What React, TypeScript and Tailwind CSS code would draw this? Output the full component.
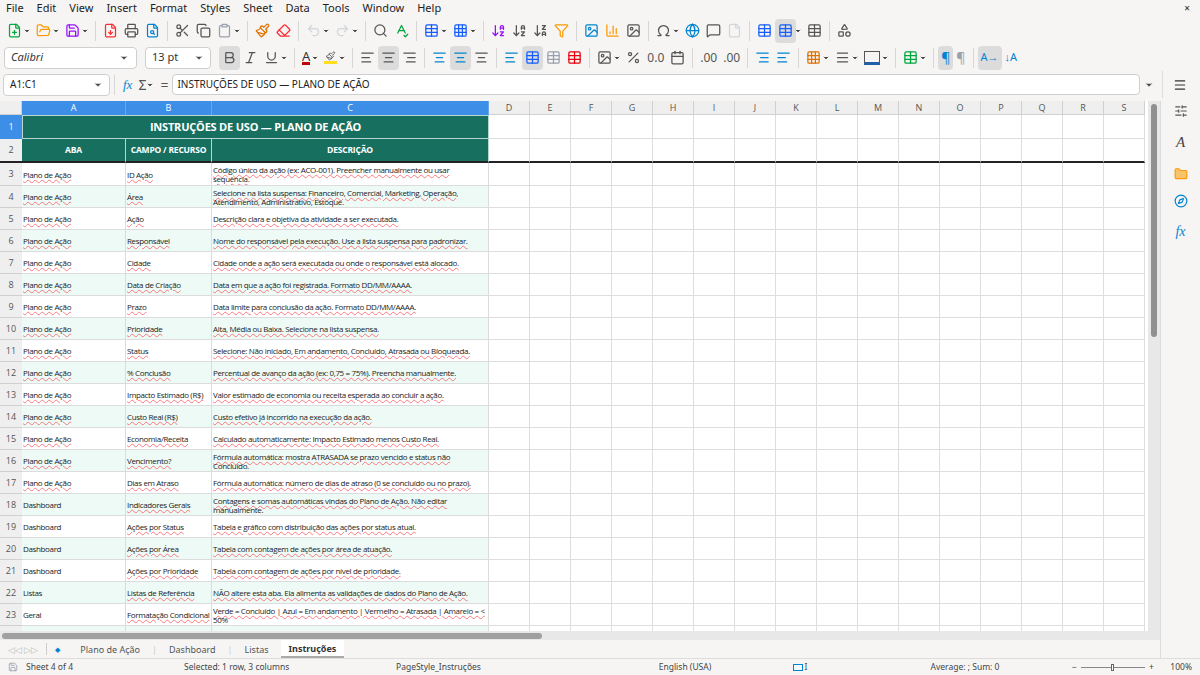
import {
  FilePlus, FolderOpen, Save, FileDown, Printer, FileSearch, Scissors, Copy, Clipboard, Paintbrush, Eraser,
  Undo2, Redo2, Search, SpellCheck, Table, Grid3x3, ArrowDownAZ, ArrowDownZA, Filter, Image, BarChart3,
  Omega, Globe, MessageSquare, File, Shapes, Bold, Italic, Underline, AlignLeft, AlignCenter, AlignRight,
  Percent, Calendar, Menu, SlidersHorizontal, Folder, Compass, ChevronDown,
} from "lucide-react";

const ui = { fontFamily: '"Noto Sans", "Open Sans", sans-serif' };
const cellFont = { fontFamily: '"Open Sans", "Liberation Sans", sans-serif' };

const rows: [string, string, string][] = [
  ["Plano de Ação", "ID Ação", "Código único da ação (ex: ACO-001). Preencher manualmente ou usar sequência."],
  ["Plano de Ação", "Área", "Selecione na lista suspensa: Financeiro, Comercial, Marketing, Operação, Atendimento, Administrativo, Estoque."],
  ["Plano de Ação", "Ação", "Descrição clara e objetiva da atividade a ser executada."],
  ["Plano de Ação", "Responsável", "Nome do responsável pela execução. Use a lista suspensa para padronizar."],
  ["Plano de Ação", "Cidade", "Cidade onde a ação será executada ou onde o responsável está alocado."],
  ["Plano de Ação", "Data de Criação", "Data em que a ação foi registrada. Formato DD/MM/AAAA."],
  ["Plano de Ação", "Prazo", "Data limite para conclusão da ação. Formato DD/MM/AAAA."],
  ["Plano de Ação", "Prioridade", "Alta, Média ou Baixa. Selecione na lista suspensa."],
  ["Plano de Ação", "Status", "Selecione: Não iniciado, Em andamento, Concluído, Atrasada ou Bloqueada."],
  ["Plano de Ação", "% Conclusão", "Percentual de avanço da ação (ex: 0,75 = 75%). Preencha manualmente."],
  ["Plano de Ação", "Impacto Estimado (R$)", "Valor estimado de economia ou receita esperada ao concluir a ação."],
  ["Plano de Ação", "Custo Real (R$)", "Custo efetivo já incorrido na execução da ação."],
  ["Plano de Ação", "Economia/Receita", "Calculado automaticamente: Impacto Estimado menos Custo Real."],
  ["Plano de Ação", "Vencimento?", "Fórmula automática: mostra ATRASADA se prazo vencido e status não Concluído."],
  ["Plano de Ação", "Dias em Atraso", "Fórmula automática: número de dias de atraso (0 se concluído ou no prazo)."],
  ["Dashboard", "Indicadores Gerais", "Contagens e somas automáticas vindas do Plano de Ação. Não editar manualmente."],
  ["Dashboard", "Ações por Status", "Tabela e gráfico com distribuição das ações por status atual."],
  ["Dashboard", "Ações por Área", "Tabela com contagem de ações por área de atuação."],
  ["Dashboard", "Ações por Prioridade", "Tabela com contagem de ações por nível de prioridade."],
  ["Listas", "Listas de Referência", "NÃO altere esta aba. Ela alimenta as validações de dados do Plano de Ação."],
  ["Geral", "Formatação Condicional", "Verde = Concluído | Azul = Em andamento | Vermelho = Atrasada | Amarelo = < 50%"],
  ["Geral", "Atualização", "Atualize o % Conclusão e o Status semanalmente para manter o dashboard"],
];

const extra = ["D", "E", "F", "G", "H", "I", "J", "K", "L", "M", "N", "O", "P", "Q", "R", "S"];
const cols = "22px 104px 86px 277px repeat(16, 41px)";

function Ico({ children, active }: { children: React.ReactNode; active?: boolean }) {
  return <div className={`h-6 px-[3px] flex items-center rounded ${active ? "bg-[#dcdcdc]" : ""}`}>{children}</div>;
}
const Sep = () => <div className="w-px h-5 bg-[#d6d6d6] mx-1" />;
const Dd = () => <ChevronDown size={8} className="text-[#444] -ml-0.5 mr-0.5" fill="#444" />;

export default function App() {
  const s = 15;
  return (
    <div style={ui} className="w-[1200px] h-[675px] bg-[#f6f5f4] flex flex-col overflow-hidden text-[#222]">
      {/* menu */}
      <div className="h-[17px] flex items-center text-[11px] gap-[13px] px-[6px]">
        {["File", "Edit", "View", "Insert", "Format", "Styles", "Sheet", "Data", "Tools", "Window", "Help"].map(m => <span key={m}>{m}</span>)}
        <span className="ml-auto text-[10px] pr-1">×</span>
      </div>
      {/* toolbar 1 */}
      <div className="h-[27px] flex items-center px-1 text-[#555]">
        <Ico><FilePlus size={s} className="text-green-600" /></Ico><Dd />
        <Ico><FolderOpen size={s} className="text-amber-500" /></Ico><Dd />
        <Ico><Save size={s} className="text-purple-600" /></Ico><Dd />
        <Sep />
        <Ico><FileDown size={s} className="text-red-500" /></Ico>
        <Ico><Printer size={s} /></Ico>
        <Ico><FileSearch size={s} className="text-sky-600" /></Ico>
        <Sep />
        <Ico><Scissors size={s} /></Ico>
        <Ico><Copy size={s} /></Ico>
        <Ico><Clipboard size={s} className="text-gray-400" /></Ico><Dd />
        <Sep />
        <Ico><Paintbrush size={s} className="text-amber-600" /></Ico>
        <Ico><Eraser size={s} className="text-red-500" /></Ico>
        <Sep />
        <Ico><Undo2 size={s} className="text-gray-300" /></Ico><Dd />
        <Ico><Redo2 size={s} className="text-gray-300" /></Ico><Dd />
        <Sep />
        <Ico><Search size={s} /></Ico>
        <Ico><SpellCheck size={s} className="text-green-600" /></Ico>
        <Sep />
        <Ico><Table size={s} className="text-blue-600" /></Ico><Dd />
        <Ico><Grid3x3 size={s} className="text-blue-600" /></Ico><Dd />
        <Sep />
        <Ico><ArrowDownAZ size={s} className="text-purple-600" /></Ico>
        <Ico><ArrowDownAZ size={s} /></Ico>
        <Ico><ArrowDownZA size={s} /></Ico>
        <Ico><Filter size={s} className="text-amber-500" /></Ico>
        <Sep />
        <Ico><Image size={s} className="text-sky-600" /></Ico>
        <Ico><BarChart3 size={s} className="text-amber-500" /></Ico>
        <Ico><Image size={s} /></Ico>
        <Sep />
        <Ico><Omega size={s} /></Ico><Dd />
        <Ico><Globe size={s} className="text-sky-600" /></Ico>
        <Ico><MessageSquare size={s} /></Ico>
        <Ico><File size={s} className="text-gray-300" /></Ico>
        <Sep />
        <Ico><Table size={s} className="text-blue-600" /></Ico>
        <Ico active><Table size={s} className="text-blue-600" /></Ico><Dd />
        <Ico><Table size={s} /></Ico>
        <Sep />
        <Ico><Shapes size={s} /></Ico>
      </div>
      {/* toolbar 2 */}
      <div className="h-[27px] flex items-center px-1 text-[#555]">
        <div className="w-[133px] h-[22px] bg-white border border-[#cfcfcf] rounded flex items-center">
          <span className="flex-1 italic text-[11px] px-1.5 text-[#333]">Calibri</span>
          <div className="w-[25px] flex justify-center"><ChevronDown size={10} fill="#444" /></div>
        </div>
        <div className="w-[66px] h-[22px] ml-2 bg-white border border-[#cfcfcf] rounded flex items-center">
          <span className="flex-1 text-[11px] px-1.5 text-[#333]">13 pt</span>
          <div className="w-[22px] flex justify-center"><ChevronDown size={10} fill="#444" /></div>
        </div>
        <div className="ml-2" />
        <Ico active><Bold size={s} /></Ico>
        <Ico><Italic size={s} /></Ico>
        <Ico><Underline size={s} /></Ico><Dd />
        <Sep />
        <Ico><span className="text-[13px] border-b-[3px] border-red-700 leading-[12px] text-[#333]">A</span></Ico><Dd />
        <Ico><Paintbrush size={13} className="border-b-[3px] border-yellow-300" /></Ico><Dd />
        <Sep />
        <Ico><AlignLeft size={s} /></Ico>
        <Ico active><AlignCenter size={s} /></Ico>
        <Ico><AlignRight size={s} /></Ico>
        <Sep />
        <Ico><AlignCenter size={s} className="text-sky-600" /></Ico>
        <Ico active><AlignCenter size={s} className="text-sky-600" /></Ico>
        <Ico><AlignCenter size={s} /></Ico>
        <Sep />
        <Ico><AlignLeft size={s} className="text-sky-600" /></Ico>
        <Ico active><Table size={s} className="text-blue-600" /></Ico>
        <Ico><Table size={s} className="text-gray-400" /></Ico>
        <Ico><Table size={s} className="text-red-600" /></Ico>
        <Sep />
        <Ico><Image size={s} /></Ico><Dd />
        <Ico><Percent size={s} /></Ico>
        <Ico><span className="text-[12px]">0.0</span></Ico>
        <Ico><Calendar size={s} /></Ico>
        <Sep />
        <Ico><span className="text-[12px]">.00</span></Ico>
        <Ico><span className="text-[12px]">.00</span></Ico>
        <Sep />
        <Ico><AlignRight size={s} className="text-sky-600" /></Ico>
        <Ico><AlignLeft size={s} className="text-sky-600" /></Ico>
        <Sep />
        <Ico><Grid3x3 size={s} className="text-amber-600" /></Ico><Dd />
        <Ico><Menu size={s} /></Ico><Dd />
        <Ico><div className="w-4 h-3.5 border-b-[3px] border-[#1e5fa8] border-x border-t border-x-[#555] border-t-[#555]" /></Ico><Dd />
        <Sep />
        <Ico><Table size={s} className="text-green-600" /></Ico><Dd />
        <Sep />
        <Ico active><span className="text-[14px] text-sky-600">¶</span></Ico>
        <Ico><span className="text-[14px] text-gray-400">¶</span></Ico>
        <Sep />
        <Ico active><span className="text-[11px] text-sky-600">A→</span></Ico>
        <Ico><span className="text-[11px] text-sky-600">↓A</span></Ico>
      </div>
      {/* formula bar */}
      <div className="h-[27px] flex items-center px-[3px] text-[#555]">
        <div className="w-[107px] h-[22px] bg-white border border-[#cfcfcf] rounded flex items-center">
          <span className="flex-1 text-[10px] px-1.5 text-[#222]">A1:C1</span>
          <div className="w-[22px] flex justify-center"><ChevronDown size={10} fill="#444" /></div>
        </div>
        <div className="w-px h-5 bg-[#d6d6d6] mx-1" />
        <span className="italic text-sky-600 text-[13px] px-1" style={{ fontFamily: '"Liberation Serif", serif' }}>fx</span>
        <span className="text-[14px] px-0.5">Σ</span><Dd />
        <span className="text-[14px] px-1">=</span>
        <div className="flex-1 h-[21px] bg-white border border-[#cfcfcf] rounded-sm flex items-center px-1 text-[10px] text-[#222]">INSTRUÇÕES DE USO — PLANO DE AÇÃO</div>
        <ChevronDown size={10} fill="#444" className="mx-1" />
        <div className="w-px h-[27px] bg-[#dcdcdc] ml-1" />
        <div className="w-[34px] flex justify-center"><Menu size={14} className="text-[#333]" /></div>
      </div>
      {/* main */}
      <div className="flex-1 flex min-h-0 mt-[3px]">
        <div className="flex-1 flex flex-col min-w-0 border-r border-[#dcdcdc]">
          <div className="flex flex-1 min-h-0">
            <div className="flex-1 bg-white overflow-hidden" style={cellFont}>
              <div className="grid" style={{ gridTemplateColumns: cols }}>
                <div className="h-[14px] bg-[#efefef] border-r border-b border-[#d0d0d0]" />
                {["A", "B", "C"].map(c => (
                  <div key={c} className="h-[14px] bg-[#3d8ee6] text-white text-[9px] flex items-center justify-center border-r border-[#6aa6ea]">{c}</div>
                ))}
                {extra.map(c => (
                  <div key={c} className="h-[14px] bg-[#efefef] text-[#555] text-[9px] flex items-center justify-center border-r border-b border-[#d0d0d0]">{c}</div>
                ))}
                {/* row 1 */}
                <div className="h-6 bg-[#3d8ee6] text-white text-[9px] flex items-center justify-center">1</div>
                <div className="col-span-3 h-6 bg-[#17705f] text-white font-bold text-[11px] tracking-[-0.2px] flex items-center justify-center border border-[#b7d6cf]">INSTRUÇÕES DE USO — PLANO DE AÇÃO</div>
                {extra.map(c => <div key={c} className="h-6 border-r border-b border-[#dedede]" />)}
                {/* row 2 */}
                <div className="h-6 bg-[#efefef] text-[#555] text-[9px] flex items-center justify-center border-b-2 border-[#222]">2</div>
                {["ABA", "CAMPO / RECURSO", "DESCRIÇÃO"].map(h => (
                  <div key={h} className="h-6 bg-[#17705f] text-white font-bold text-[8.5px] tracking-[-0.2px] flex items-center justify-center border-r border-[#b7d6cf] border-b-2 border-b-[#222]">{h}</div>
                ))}
                {extra.map(c => <div key={c} className="h-6 border-r border-[#dedede] border-b-2 border-b-[#222]" />)}
                {rows.map((r, i) => {
                  const tint = i % 2 === 1 ? "bg-[#eefaf6]" : "bg-white";
                  const h = i === 0 ? "h-[23px]" : "h-[22px]";
                  return [
                    <div key={`h${i}`} className={`${h} bg-[#efefef] text-[#555] text-[9px] flex items-center justify-center border-b border-[#d0d0d0]`}>{i + 3}</div>,
                    ...r.map((t, j) => (
                      <div key={`${i}-${j}`} className={`${h} ${tint} text-[8px] tracking-[-0.35px] leading-[9px] px-[1px] flex items-center border-r border-b border-[#dcdcdc] overflow-hidden text-[#222]`}>
                        <span className={j > 0 || i < 15 ? "underline decoration-wavy decoration-red-500/60 decoration-[0.5px] underline-offset-1" : ""}>{t}</span>
                      </div>
                    )),
                    ...extra.map(c => <div key={`${i}${c}`} className={`${h} border-r border-b border-[#dedede]`} />),
                  ];
                })}
              </div>
            </div>
            <div className="w-[12px] bg-[#e8e8e8] flex flex-col items-center pt-[3px]">
              <div className="w-[6px] h-[233px] bg-[#909090] rounded-full" />
            </div>
          </div>
          <div className="h-[9px] bg-[#e8e8e8] flex items-center px-[2px]">
            <div className="w-[540px] h-[6px] bg-[#a0a0a0] rounded-full" />
          </div>
          {/* tabs */}
          <div className="h-[18px] flex items-center text-[9px] leading-none text-[#555]">
            <span className="text-[#bbb] px-2 text-[9px]">◁◁ ▷▷</span>
            <div className="w-px h-3 bg-[#ccc]" />
            <span className="px-2 text-sky-600 text-[7px]">◆</span>
            <span className="px-3">Plano de Ação</span>
            <span className="text-[#ccc]">|</span>
            <span className="px-3">Dashboard</span>
            <span className="text-[#ccc]">|</span>
            <span className="px-3">Listas</span>
            <span className="px-2 font-bold text-[#333] bg-white border-b-2 border-[#aaa] h-full flex items-center">Instruções</span>
          </div>
        </div>
        {/* sidebar */}
        <div className="w-[39px] flex flex-col items-center gap-[13px] pt-[6px] -mt-[3px] text-[#555]">
          <SlidersHorizontal size={14} />
          <span className="text-[15px] italic text-[#444]" style={{ fontFamily: '"Liberation Serif", serif' }}>A</span>
          <Folder size={14} className="text-amber-500" fill="#f7c36b" />
          <Compass size={14} className="text-sky-600" />
          <span className="italic text-sky-600 text-[14px]" style={{ fontFamily: '"Liberation Serif", serif' }}>fx</span>
        </div>
      </div>
      {/* status bar */}
      <div className="h-[17px] flex items-center text-[8.5px] text-[#444] border-t border-[#ddd]">
        <div className="w-[160px] flex items-center gap-2 pl-2"><Save size={10} className="text-gray-400" /> Sheet 4 of 4</div>
        <div className="w-[220px] pl-6">Selected: 1 row, 3 columns</div>
        <div className="w-[220px] pl-4">PageStyle_Instruções</div>
        <div className="w-[170px] text-center">English (USA)</div>
        <div className="w-[60px] flex items-center justify-center gap-0.5"><div className="w-[10px] h-[7px] border border-sky-600 bg-sky-50" /><span>I</span></div>
        <div className="w-[40px]" />
        <div className="w-[190px] text-center">Average: ; Sum: 0</div>
        <div className="flex items-center gap-1 pl-3">
          <span>−</span><div className="w-[64px] h-px bg-[#888] relative"><div className="absolute left-[30px] -top-[3px] w-[3px] h-[7px] border border-[#666] bg-white" /></div><span>+</span>
        </div>
        <div className="ml-auto pr-2">100%</div>
      </div>
    </div>
  );
}
